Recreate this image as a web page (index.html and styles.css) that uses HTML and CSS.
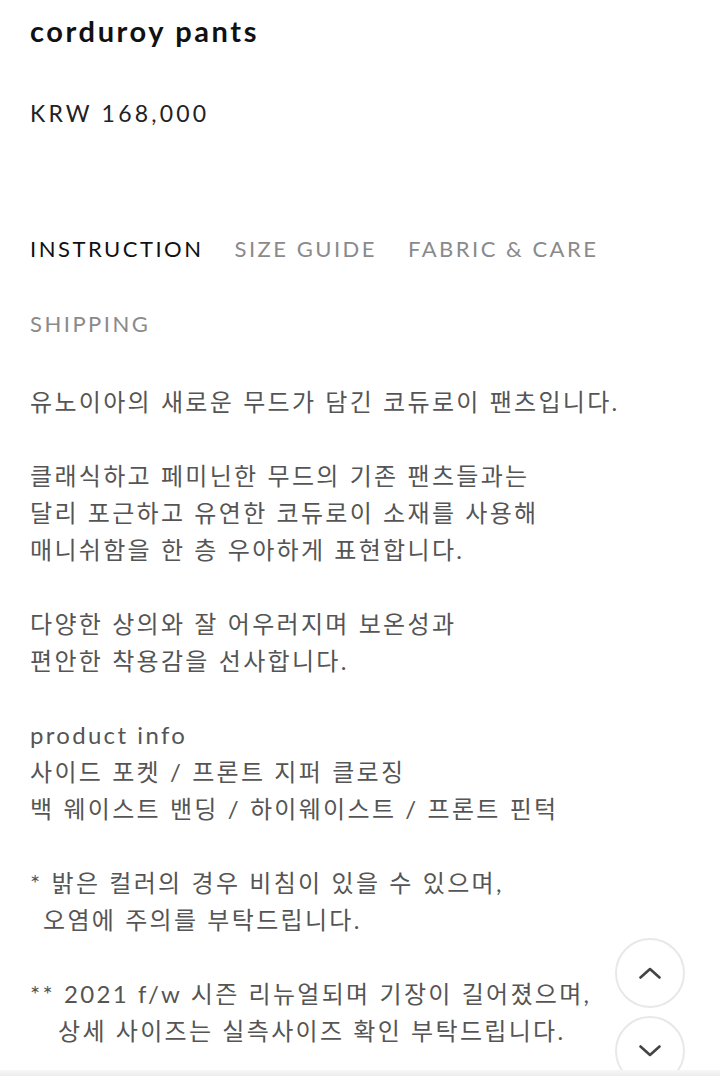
FILE: index.html
```html
<!DOCTYPE html>
<html lang="ko">
<head>
<meta charset="utf-8">
<title>corduroy pants</title>
<link rel="stylesheet" href="styles.css">
</head>
<body>
<main class="product">
  <h1 class="title">corduroy pants</h1>
  <p class="price">KRW 168,000</p>

  <nav class="tabs">
    <a class="tab active">INSTRUCTION</a>
    <a class="tab">SIZE GUIDE</a>
    <a class="tab">FABRIC &amp; CARE</a>
    <a class="tab">SHIPPING</a>
  </nav>

  <div class="desc">
    <p>유노이아의 새로운 무드가 담긴 코듀로이 팬츠입니다.</p>
    <p>클래식하고 페미닌한 무드의 기존 팬츠들과는<br>달리 포근하고 유연한 코듀로이 소재를 사용해<br>매니쉬함을 한 층 우아하게 표현합니다.</p>
    <p>다양한 상의와 잘 어우러지며 보온성과<br>편안한 착용감을 선사합니다.</p>
    <p>product info<br>사이드 포켓 / 프론트 지퍼 클로징<br>백 웨이스트 밴딩 / 하이웨이스트 / 프론트 핀턱</p>
    <p><span class="star">*</span> 밝은 컬러의 경우 비침이 있을 수 있으며,<br><span class="ind1"></span>오염에 주의를 부탁드립니다.</p>
    <p><span class="star">**</span> 2021 f/w 시즌 리뉴얼되며 기장이 길어졌으며,<br><span class="ind2"></span>상세 사이즈는 실측사이즈 확인 부탁드립니다.</p>
  </div>
</main>

<div class="scroll-btns">
  <button class="circle" aria-label="top">
    <svg width="22" height="12" viewBox="0 0 22 12"><polyline points="1.5,10.5 11,2 20.5,10.5" fill="none" stroke="#444" stroke-width="2.6" stroke-linecap="round" stroke-linejoin="round"/></svg>
  </button>
  <button class="circle" aria-label="bottom">
    <svg width="22" height="12" viewBox="0 0 22 12"><polyline points="1.5,1.5 11,10 20.5,1.5" fill="none" stroke="#444" stroke-width="2.6" stroke-linecap="round" stroke-linejoin="round"/></svg>
  </button>
</div>
<div class="bottom-bar"></div>
</body>
</html>
```

FILE: styles.css
```css
html, body {
  margin: 0;
  padding: 0;
  background: #fff;
}

body {
  font-family: Lato, "Noto Sans CJK KR", sans-serif;
  color: #555;
}

.product {
  padding: 13px 30px 40px;
}

.title {
  margin: 0;
  font-size: 29px;
  line-height: 36px;
  font-weight: 700;
  letter-spacing: 2.6px;
  color: #111;
}

.price {
  margin: 49px 0 0;
  font-size: 23px;
  line-height: 30px;
  letter-spacing: 3.2px;
  color: #222;
}

.tabs {
  display: flex;
  flex-wrap: wrap;
  column-gap: 31px;
  row-gap: 45px;
  margin-top: 106px;
}

.tab {
  font-size: 22px;
  line-height: 30px;
  letter-spacing: 2.5px;
  color: #8a8a8a;
}

.tab.active {
  color: #111;
}

.desc {
  margin-top: 44px;
  font-size: 24px;
  line-height: 37px;
  letter-spacing: 2.3px;
  word-spacing: 0.6px;
  color: #555;
}

.desc p {
  margin: 0 0 37px;
}

.ind1 {
  display: inline-block;
  width: 13px;
}

.ind2 {
  display: inline-block;
  width: 28px;
}

.scroll-btns {
  position: fixed;
  right: 35px;
  top: 938px;
  display: flex;
  flex-direction: column;
  gap: 8px;
}

.circle {
  width: 70px;
  height: 70px;
  border-radius: 50%;
  border: 2px solid #e8e8e8;
  background: #fff;
  display: flex;
  align-items: center;
  justify-content: center;
  padding: 0;
}

.bottom-bar {
  position: fixed;
  left: 0;
  right: 0;
  bottom: 0;
  height: 6px;
  background: linear-gradient(#f7f7f7, #ececec);
}
```
